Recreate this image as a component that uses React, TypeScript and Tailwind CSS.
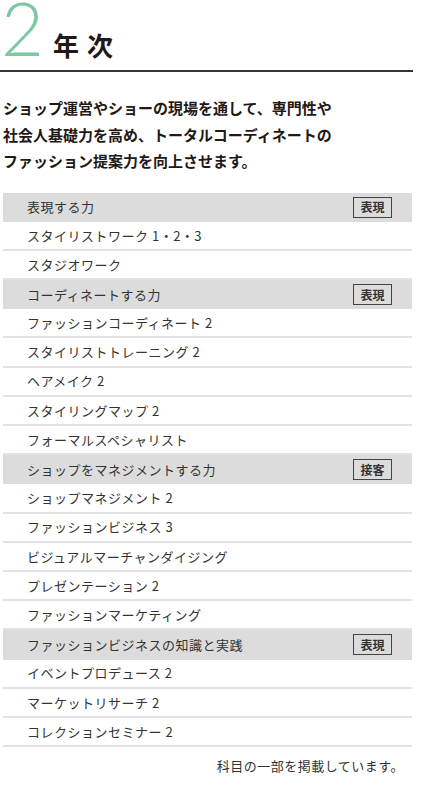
import React from "react";

type Row = { label: string; head?: boolean; badge?: string };

const rows: Row[] = [
  { label: "表現する力", head: true, badge: "表現" },
  { label: "スタイリストワーク 1・2・3" },
  { label: "スタジオワーク" },
  { label: "コーディネートする力", head: true, badge: "表現" },
  { label: "ファッションコーディネート 2" },
  { label: "スタイリストトレーニング 2" },
  { label: "ヘアメイク 2" },
  { label: "スタイリングマップ 2" },
  { label: "フォーマルスペシャリスト" },
  { label: "ショップをマネジメントする力", head: true, badge: "接客" },
  { label: "ショップマネジメント 2" },
  { label: "ファッションビジネス 3" },
  { label: "ビジュアルマーチャンダイジング" },
  { label: "プレゼンテーション 2" },
  { label: "ファッションマーケティング" },
  { label: "ファッションビジネスの知識と実践", head: true, badge: "表現" },
  { label: "イベントプロデュース 2" },
  { label: "マーケットリサーチ 2" },
  { label: "コレクションセミナー 2" },
];

export default function App() {
  return (
    <div className="w-[428px] h-[802px] bg-white text-[#333] font-['Noto_Sans_CJK_JP',sans-serif] overflow-hidden">
      <div className="flex items-end h-[70px] pl-[1px]">
        <span className="font-['Lato',sans-serif] font-light text-[74px] leading-[60px] text-[#7cc8a3] mb-[12px]">
          2
        </span>
        <span className="ml-[9px] mb-[12px] text-[26px] leading-none font-bold tracking-[8px] text-[#231815]">
          年次
        </span>
      </div>
      <div className="w-[413px] h-[2px] bg-[#3a3535]" />

      <p className="mt-[23px] pl-[3px] text-[15px] leading-[26.5px] font-bold text-[#231815]">
        ショップ運営やショーの現場を通して、専門性や
        <br />
        社会人基礎力を高め、トータルコーディネートの
        <br />
        ファッション提案力を向上させます。
      </p>

      <div className="mt-[18px] ml-[3px] w-[409px]">
        {rows.map((r, i) => (
          <div
            key={i}
            className={
              r.head
                ? "flex items-center justify-between h-[29.2px] bg-[#dcdcdc] pl-[24px] pr-[20px]"
                : "flex items-center h-[29.2px] border-b-2 border-[#e3e3e3] pl-[24px]"
            }
          >
            <span className="text-[13px] tracking-[0.5px] text-[#333]">{r.label}</span>
            {r.badge && (
              <span className="flex items-center justify-center w-[39px] h-[21px] border border-[#444] text-[12px] font-bold leading-none">
                {r.badge}
              </span>
            )}
          </div>
        ))}
      </div>

      <div className="mt-[9px] w-[404px] text-right text-[13px] tracking-[0.5px] text-[#333]">
        科目の一部を掲載しています。
      </div>
    </div>
  );
}
